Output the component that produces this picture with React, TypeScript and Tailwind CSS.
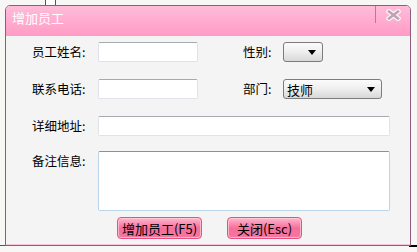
const font = { fontFamily: '"Noto Sans CJK SC", "Liberation Sans", sans-serif' };

function TextBox({ className = "" }: { className?: string }) {
  return (
    <div
      className={`h-[20px] bg-white border border-[#e2e2ea] border-t-[#a8a8b0] rounded-[2px] ${className}`}
    />
  );
}

function Select({ value, className = "" }: { value?: string; className?: string }) {
  return (
    <div
      className={`h-[20px] flex items-center justify-between pl-[3px] pr-[6px] rounded-[3px] border border-[#7c7c7c] bg-gradient-to-b from-[#fbfbfb] via-[#eeeeee] to-[#d8d8d8] text-[13px] text-black ${className}`}
    >
      <span className="leading-none">{value}</span>
      <svg width="8" height="5" viewBox="0 0 8 5">
        <path d="M0 0h8L4 5z" fill="#000" />
      </svg>
    </div>
  );
}

function PinkButton({ children, className = "" }: { children: React.ReactNode; className?: string }) {
  return (
    <button
      className={`h-[22px] rounded-[4px] border border-[#e8507f] bg-gradient-to-b from-[#ffb6cf] via-[#f66e9b] to-[#f4779f] shadow-[inset_0_0_0_1px_rgba(255,210,225,0.7)] text-[13px] text-black leading-none flex items-center justify-center ${className}`}
    >
      {children}
    </button>
  );
}

function Label({ children, className = "" }: { children: React.ReactNode; className?: string }) {
  return <span className={`text-[12.5px] text-black leading-none ${className}`}>{children}</span>;
}

export default function App() {
  return (
    <div className="relative w-[417px] h-[252px] bg-[#f7f7f5] overflow-hidden" style={font}>
      {/* something behind the dialog */}
      <div className="absolute left-[45px] top-0 w-[11px] h-[6px] bg-white border-x border-[#555]" />
      <div className="absolute left-0 top-[245px] w-[417px] h-[1px] bg-[#555]" />
      <div className="absolute right-0 top-[245px] w-[8px] h-[2px] bg-black" />

      {/* dialog */}
      <div className="relative ml-[5px] mt-[5px] w-[406px] h-[241px] border border-[#8e5d7e] rounded-t-[5px] bg-[#f4f4f4] flex flex-col overflow-hidden">
        <div className="h-[30px] shrink-0 bg-gradient-to-b from-[#ffbcd9] to-[#ff9bc6] flex items-start">
          <span className="text-white text-[13px] pl-[6px] pt-[5px] leading-none">增加员工</span>
          <div className="ml-auto flex h-[17px]">
            <div className="w-[1px] bg-[#c9709e]" />
            <div className="w-[34px] flex items-center justify-center pt-[1px]">
              <svg width="15" height="12" viewBox="0 0 15 12">
                <path d="M3 2.5l9 7M12 2.5l-9 7" stroke="#fdf4f8" strokeWidth="5" strokeLinecap="square" />
                <path d="M3 2.5l9 7M12 2.5l-9 7" stroke="#bfa3b4" strokeWidth="2.5" strokeLinecap="square" />
              </svg>
            </div>
          </div>
        </div>

        <div className="flex-1 flex flex-col pt-[6px] pl-[26px] border-b border-[#f6c7dc]">
          <div className="flex items-center h-[20px]">
            <Label className="w-[66px]">员工姓名:</Label>
            <TextBox className="w-[100px]" />
            <Label className="ml-[45px] w-[40px]">性别:</Label>
            <Select className="w-[40px]" />
          </div>
          <div className="flex items-center h-[20px] mt-[17px]">
            <Label className="w-[66px]">联系电话:</Label>
            <TextBox className="w-[100px]" />
            <Label className="ml-[45px] w-[40px]">部门:</Label>
            <Select value="技师" className="w-[99px]" />
          </div>
          <div className="flex items-center h-[20px] mt-[17px]">
            <Label className="w-[66px]">详细地址:</Label>
            <TextBox className="w-[292px]" />
          </div>
          <div className="flex items-start mt-[15px]">
            <Label className="w-[66px] pt-[4px]">备注信息:</Label>
            <div className="w-[292px] h-[60px] bg-white border border-[#bcd4ea] border-t-[#6f98bf] rounded-[2px]" />
          </div>
          <div className="flex mt-[6px] pl-[85px] gap-[25px]">
            <PinkButton className="w-[85px]">增加员工(F5)</PinkButton>
            <PinkButton className="w-[75px]">关闭(Esc)</PinkButton>
          </div>
        </div>
      </div>
    </div>
  );
}
